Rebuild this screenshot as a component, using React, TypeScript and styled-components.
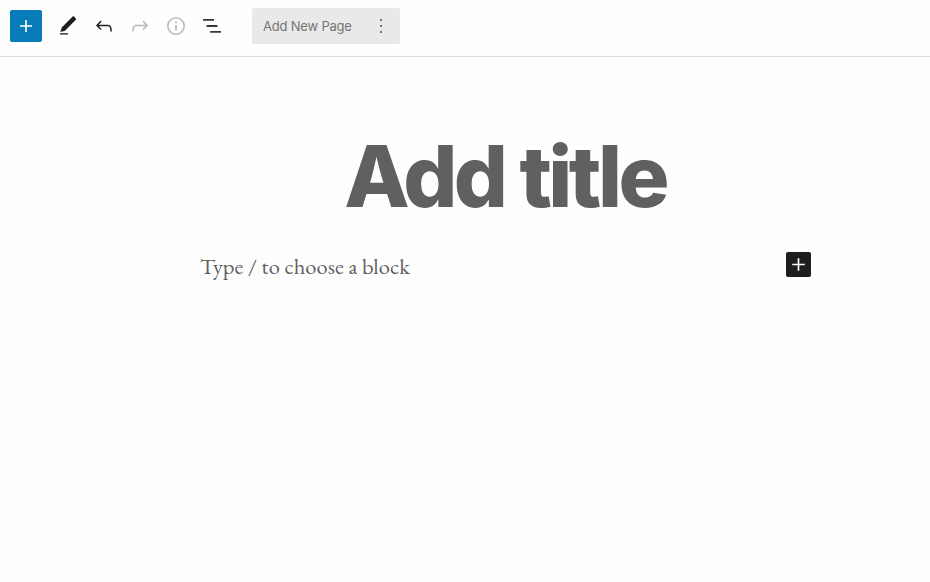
import React from "react";
import styled, { createGlobalStyle } from "styled-components";

const GlobalStyle = createGlobalStyle`
  * { box-sizing: border-box; }
  body { margin: 0; background: #fefefe; overflow: hidden; }
`;

const Editor = styled.div`
  display: flex;
  flex-direction: column;
  height: 582px;
  background: #fefefe;
`;

const Toolbar = styled.header`
  display: flex;
  align-items: flex-start;
  height: 57px;
  padding: 8px 0 0 10px;
  border-bottom: 1px solid #dedede;
`;

const ToolButton = styled.button<{ $disabled?: boolean }>`
  display: flex;
  width: 36px;
  height: 36px;
  padding: 6px;
  border: 0;
  background: none;
  color: ${(p) => (p.$disabled ? "#b9b9b9" : "#1e1e1e")};
`;

const Inserter = styled.button`
  display: flex;
  align-items: center;
  justify-content: center;
  width: 32px;
  height: 32px;
  margin: 2px 8px 0 0;
  padding: 0;
  border: 0;
  border-radius: 2px;
  background: #087cb8;
  color: #fff;
`;

const PageTab = styled.div`
  display: flex;
  align-items: center;
  justify-content: space-between;
  width: 148px;
  height: 36px;
  margin-left: 22px;
  padding: 0 7px 0 11px;
  border-radius: 2px;
  background: #e9e9e9;
  color: #757575;
  font: 400 13px/36px Inter, sans-serif;
  letter-spacing: -0.2px;
  white-space: nowrap;
`;

const Canvas = styled.main`
  display: flex;
  flex-direction: column;
  width: 610px;
  margin-left: 201px;
  padding-top: 70px;
`;

const Title = styled.h1`
  margin: 0 1px 0 -1px;
  color: #606060;
  font: 800 85px/100px Inter, sans-serif;
  letter-spacing: -3.6px;
  text-align: center;
  white-space: nowrap;
`;

const Block = styled.div`
  display: flex;
  align-items: center;
  justify-content: space-between;
  height: 25px;
  margin-top: 25px;
`;

const Prompt = styled.p`
  margin: 3px 0 0 -1px;
  color: #606060;
  font: 400 22.5px/26px "EB Garamond", "Liberation Serif", serif;
  letter-spacing: 0.06px;
`;

const BlockInserter = styled.button`
  display: flex;
  width: 25px;
  height: 25px;
  padding: 0;
  border: 0;
  border-radius: 2px;
  background: #1e1e1e;
  color: #fff;
`;

const Icon = ({ size = 24, children }: { size?: number; children: React.ReactNode }) => (
  <svg width={size} height={size} viewBox="0 0 24 24" fill="currentColor">
    {children}
  </svg>
);

export default function App() {
  return (
    <Editor>
      <GlobalStyle />
      <Toolbar>
        <Inserter aria-label="Add block">
          <Icon><path d="M18 11.2h-5.2V6h-1.600v5.2H6v1.600h5.200V18h1.600v-5.200H18z" /></Icon>
        </Inserter>
        <ToolButton aria-label="Edit">
          <Icon>
            <path d="m18 2.600 1.800 1.900c.4.4.4.9 0 1.300L9 16.700l-4.600 1.300 1.300-4.600L16.700 2.600c.4-.4.900-.4 1.300 0z" />
            <path fill="#505050" d="M4 19h8v1.700H4z" />
          </Icon>
        </ToolButton>
        <ToolButton aria-label="Undo">
          <Icon><path d="M18.300 11.700c-.6-.6-1.400-.9-2.300-.9H6.700l2.900-3.300-1.100-1-4.500 5L8.500 16l1-1-2.700-2.700H16c.5 0 .9.200 1.300.5 1 1 1 3.400 1 4.500v.3h1.500v-.2c0-1.500 0-4.300-1.500-5.700z" /></Icon>
        </ToolButton>
        <ToolButton aria-label="Redo" $disabled>
          <Icon><path d="M15.600 6.500l-1.100 1 2.900 3.300H8c-.9 0-1.700.3-2.300.9-1.400 1.500-1.400 4.200-1.400 5.600v.2h1.500v-.3c0-1.100 0-3.500 1-4.500.3-.3.700-.5 1.300-.5h9.200L14.500 15l1.100 1.100 4.600-4.600-4.600-5z" /></Icon>
        </ToolButton>
        <ToolButton aria-label="Details" $disabled>
          <Icon>
            <circle cx="12" cy="12" r="8.200" fill="none" stroke="currentColor" strokeWidth="1.600" />
            <path d="M11.100 11h1.800v5.200h-1.800zM11.100 7.400h1.800V9.200h-1.800z" />
          </Icon>
        </ToolButton>
        <ToolButton aria-label="List view">
          <Icon><path fill="#383838" d="M3 5h11v1.800H3zM6.600 11.100H17.500v1.800H6.600zM10.200 17H21v1.800H10.200z" /></Icon>
        </ToolButton>
        <PageTab>
          <span>Add New Page</span>
          <Icon><path d="M11 5h2v2h-2zM11 11h2v2h-2zM11 17h2v2h-2z" /></Icon>
        </PageTab>
      </Toolbar>
      <Canvas>
        <Title>Add title</Title>
        <Block>
          <Prompt>Type / to choose a block</Prompt>
          <BlockInserter aria-label="Add block">
            <Icon size={25}><path d="M18 11.200h-5.200V6h-1.600v5.200H6v1.600h5.200V18h1.600v-5.200H18z" /></Icon>
          </BlockInserter>
        </Block>
      </Canvas>
    </Editor>
  );
}
